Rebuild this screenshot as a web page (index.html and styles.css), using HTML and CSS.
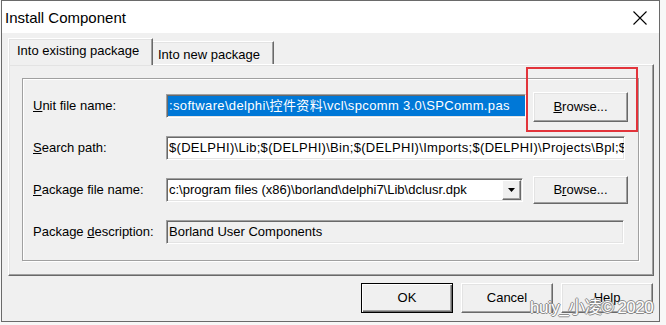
FILE: index.html
```html
<!DOCTYPE html>
<html>
<head>
<meta charset="utf-8">
<link rel="stylesheet" href="styles.css">
</head>
<body>
<div class="window">
  <div class="titlebar">
    <span class="title">Install Component</span>
    <svg class="close" width="14" height="14" viewBox="0 0 14 14"><path d="M0.5 0.5 L13.5 13.5 M13.5 0.5 L0.5 13.5" stroke="#000" stroke-width="1.1" fill="none"/></svg>
  </div>
  <div class="client">
    <div class="pagecontrol">
      <div class="tabs">
        <div class="tab active">Into existing package</div>
        <div class="tab inactive">Into new package</div>
      </div>
      <div class="sheet">
        <div class="groupbox">
          <div class="row">
            <span class="lbl"><u>U</u>nit file name:</span>
            <div class="edit w-unit"><span class="sel">:software\delphi\控件资料\vcl\spcomm 3.0\SPComm.pas</span></div>
            <div class="btn browse b1"><span><u>B</u>rowse...</span></div>
          </div>
          <div class="row">
            <span class="lbl"><u>S</u>earch path:</span>
            <div class="edit w-search"><span class="txt wide">$(DELPHI)\Lib;$(DELPHI)\Bin;$(DELPHI)\Imports;$(DELPHI)\Projects\Bpl;$</span></div>
          </div>
          <div class="row">
            <span class="lbl"><u>P</u>ackage file name:</span>
            <div class="edit combo">
              <span class="txt">c:\program files (x86)\borland\delphi7\Lib\dclusr.dpk</span>
              <div class="dropbtn"><svg width="7" height="4" viewBox="0 0 7 4"><path d="M0 0 H7 L3.5 4 Z" fill="#000"/></svg></div>
            </div>
            <div class="btn browse b2"><span>B<u>r</u>owse...</span></div>
          </div>
          <div class="row">
            <span class="lbl">Package <u>d</u>escription:</span>
            <div class="edit readonly w-desc"><span class="txt">Borland User Components</span></div>
          </div>
        </div>
      </div>
    </div>
    <div class="footer">
      <div class="btn fbtn default"><span>OK</span></div>
      <div class="btn fbtn"><span>Cancel</span></div>
      <div class="btn fbtn"><span>Help</span></div>
    </div>
  </div>
  <div class="redbox"></div>
  <div class="watermark">huiy_小凌© 2020</div>
</div>
</body>
</html>
```
FILE: styles.css
```css
* { box-sizing: border-box; }
html, body { margin: 0; padding: 0; }
body {
  background: #f7f7f7;
  width: 666px;
  height: 325px;
  overflow: hidden;
  font-family: "Liberation Sans", Arial, "Noto Sans CJK SC", sans-serif;
  font-size: 13px;
  color: #000;
}
.window {
  position: relative;
  margin-left: 1px;
  width: 659px;
  height: 322px;
  border: 1px solid #6a6a6a;
  background: #f0f0f0;
  display: flex;
  flex-direction: column;
}
.titlebar {
  height: 32px;
  background: #fff;
  display: flex;
  align-items: center;
  justify-content: space-between;
  padding: 0 12px 0 3px;
  flex: none;
}
.title {
  font-size: 15px;
  line-height: 18px;
  margin-top: 1px;
}
.close { display: block; margin-top: 1px; }
.client {
  flex: 1;
  background: #f0f0f0;
  padding: 5px 5px 0 6px;
  display: flex;
  flex-direction: column;
}
.pagecontrol { width: 646px; }
.tabs {
  height: 26px;
  display: flex;
  align-items: flex-end;
  position: relative;
  z-index: 2;
}
.tab {
  background: #f0f0f0;
  line-height: 16px;
  padding-top: 4px;
  white-space: nowrap;
}
.tab.active {
  width: 145px;
  height: 27px;
  margin-bottom: -1px;
  padding-left: 8px;
  border-top: 1px solid #fff;
  border-left: 1px solid #fff;
  border-right: 1px solid #696969;
  box-shadow: inset -1px 0 0 #a0a0a0, inset 1px 1px 0 #e3e3e3;
}
.tab.inactive {
  width: 121px;
  height: 23px;
  padding-left: 5px;
  padding-top: 5px;
  border-top: 1px solid #fff;
  border-right: 1px solid #696969;
  box-shadow: inset -1px 0 0 #a0a0a0, inset 0 1px 0 #e3e3e3;
}
.sheet {
  position: relative;
  z-index: 1;
  height: 212px;
  border: 1px solid;
  border-color: #fff #696969 #696969 #fff;
  box-shadow: inset -1px -1px 0 #a0a0a0, inset 1px 1px 0 #e3e3e3;
  padding: 13px 0 0 13px;
}
.groupbox {
  width: 617px;
  height: 183px;
  border: 1px solid #a0a0a0;
  box-shadow: 1px 1px 0 #fff, inset 1px 1px 0 #fff;
  padding: 12px 0 0 10px;
  display: flex;
  flex-direction: column;
  gap: 12px;
}
.row {
  height: 30px;
  display: flex;
  align-items: center;
}
.lbl {
  width: 133px;
  flex: none;
  white-space: nowrap;
  line-height: 16px;
}
.edit {
  height: 24px;
  flex: none;
  background: #fff;
  border: 1px solid;
  border-color: #a0a0a0 #fff #fff #a0a0a0;
  box-shadow: inset 1px 1px 0 #696969, inset -1px -1px 0 #e3e3e3;
  padding: 1px 2px 1px 1px;
  overflow: hidden;
  white-space: nowrap;
  display: flex;
  align-items: center;
}
.edit .txt {
  padding-left: 1px;
  line-height: 16px;
}
.edit .txt.wide { letter-spacing: 0.3px; }
.w-unit { width: 360px; padding-right: 0; }
.w-search { width: 459px; }
.w-desc { width: 458px; }
.readonly { background: #f0f0f0; }
.sel {
  display: block;
  flex: 1 0 auto;
  height: 20px;
  line-height: 20px;
  padding-left: 1px;
  background: #0078d7;
  color: #fff;
  white-space: nowrap;
  letter-spacing: 0.35px;
}
.combo {
  width: 357px;
  justify-content: space-between;
  padding-right: 1px;
}
.dropbtn {
  width: 19px;
  height: 20px;
  flex: none;
  background: #f0f0f0;
  border: 1px solid;
  border-color: #fff #696969 #696969 #fff;
  box-shadow: inset -1px -1px 0 #a0a0a0;
  display: flex;
  align-items: center;
  justify-content: center;
}
.dropbtn svg { display: block; }
.btn {
  background: #f0f0f0;
  border: 1px solid;
  border-color: #fff #696969 #696969 #fff;
  box-shadow: inset -1px -1px 0 #a0a0a0, inset 1px 1px 0 #e3e3e3;
  display: flex;
  align-items: center;
  justify-content: center;
  line-height: 16px;
  flex: none;
}
.browse { width: 95px; }
.b1 { margin-left: 7px; height: 30px; margin-top: 2px; }
.b2 { margin-left: 10px; height: 28px; }
.footer {
  margin-top: 7px;
  display: flex;
  justify-content: flex-end;
  gap: 8px;
  padding-right: 1px;
}
.fbtn {
  width: 92px;
  height: 30px;
}
.fbtn.default {
  border-color: #000;
  box-shadow: inset 1px 1px 0 #fff, inset -1px -1px 0 #696969, inset -2px -2px 0 #a0a0a0;
}
.redbox {
  position: absolute;
  left: 524px;
  top: 66px;
  width: 112px;
  height: 65px;
  border: 2px solid #e2343b;
  z-index: 5;
}
.watermark {
  position: absolute;
  left: 528px;
  top: 297px;
  font-family: "Liberation Sans", Arial, "Noto Sans CJK SC", sans-serif;
  font-size: 17px;
  line-height: 20px;
  color: #fff;
  white-space: nowrap;
  letter-spacing: -0.5px;
  text-shadow: 1px 0 0 #8a8a8a, -1px 0 0 #8a8a8a, 0 1px 0 #8a8a8a, 0 -1px 0 #8a8a8a;
  z-index: 6;
}
```
